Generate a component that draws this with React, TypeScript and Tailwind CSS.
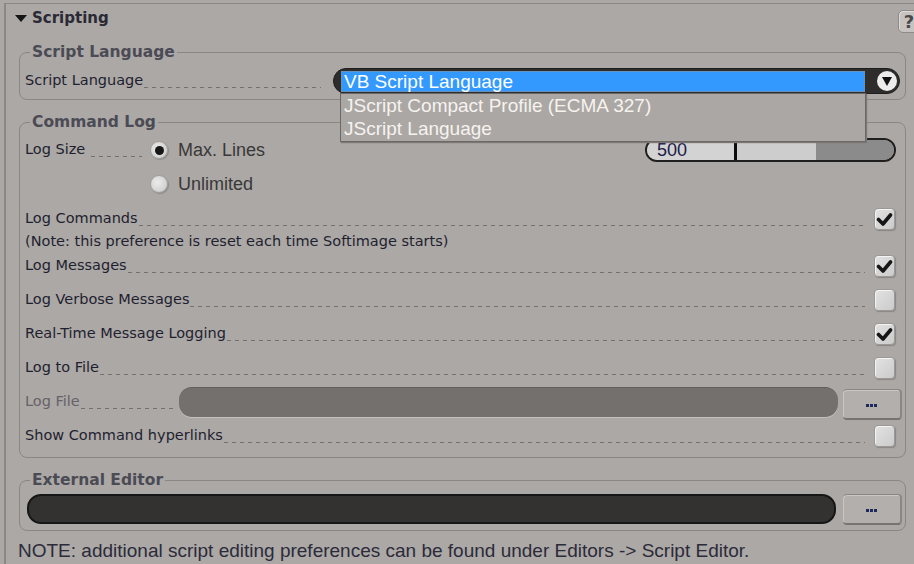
import React from "react";

const LBL = "font-['DejaVu_Sans',sans-serif] text-[14.5px] text-[#1e1f30]";
const ARIAL = "font-['Liberation_Sans',Arial,sans-serif]";
const TITLE = "font-['DejaVu_Sans',sans-serif] font-bold text-[15.5px] leading-[18px] text-[#4b4b55]";

function Leader({ className = "" }: { className?: string }) {
  return (
    <div
      className={
        "h-px mt-[12px] bg-[linear-gradient(to_right,#75716e_50%,transparent_50%)] bg-[length:8px_1px] bg-repeat-x " +
        className
      }
    />
  );
}

function Check({ checked }: { checked: boolean }) {
  return (
    <div className="w-[21px] h-[22px] shrink-0 rounded-[4px] border border-[#9c9895] bg-[linear-gradient(135deg,#e2e2e2,#cbcbcb)] shadow-[inset_1px_1px_0_#f4f4f4,1px_1px_1px_#8a8683] flex items-center justify-center">
      {checked && (
        <svg width="17" height="15" viewBox="0 0 17 15">
          <path d="M2.5 7.5 L7 12 L14.5 3" fill="none" stroke="#161616" strokeWidth="3.6" strokeLinecap="round" strokeLinejoin="round" />
        </svg>
      )}
    </div>
  );
}

function Radio({ on }: { on: boolean }) {
  return (
    <div className="w-[18px] h-[18px] shrink-0 rounded-full border border-[#a29e9b] bg-[radial-gradient(circle_at_40%_40%,#ececec,#c6c6c6)] shadow-[1px_1px_1px_#8d8986] flex items-center justify-center">
      {on && <div className="w-[9px] h-[9px] rounded-full bg-[#161616]" />}
    </div>
  );
}

function CheckRow({ label, checked, className = "h-[34px]" }: { label: string; checked: boolean; className?: string }) {
  return (
    <div className={"flex items-center " + className}>
      <div className="flex-1 flex items-center h-full">
        <span className={LBL + " whitespace-nowrap"}>{label}</span>
        <Leader className="flex-1 ml-[1px]" />
      </div>
      <div className="w-[9px]" />
      <Check checked={checked} />
    </div>
  );
}

function DotsButton() {
  return (
    <div className="w-[59px] h-[31px] shrink-0 rounded-[4px] border-t border-t-[#8a8683] border-b-2 border-b-[#77736f] border-r-2 border-r-[#8a8683] bg-[#b3afac] shadow-[inset_1px_1px_0_#c9c6c3] flex items-center justify-center">
      <div className="flex gap-[1px] mt-[3px]">
        <div className="w-[3px] h-[3px] bg-[#1d2a5a]" />
        <div className="w-[3px] h-[3px] bg-[#1d2a5a]" />
        <div className="w-[3px] h-[3px] bg-[#1d2a5a]" />
      </div>
    </div>
  );
}

export default function App() {
  return (
    <div className="w-[914px] h-[564px] bg-[#aca8a5] overflow-hidden">
      <div className="ml-[4px] mt-[3px] h-[561px] border-l-2 border-t border-[#8b8784] pl-[13px] pr-[8px]">
        {/* Header */}
        <div className="h-[29px] flex items-center">
          <svg width="12" height="7" viewBox="0 0 12 7" className="-ml-[4px] mr-[5px]">
            <polygon points="0,0 12,0 6,7" fill="#151515" />
          </svg>
          <span className="font-['DejaVu_Sans',sans-serif] font-bold text-[15px] text-[#2a2a35]">Scripting</span>
          <div className="ml-auto -mr-[14px] mt-[6px] w-[22px] h-[23px] rounded-[5px] border border-[#8e8a87] bg-[#c6c3c0] shadow-[inset_1px_1px_0_#dedbd8] flex items-center justify-center">
            <span className="font-['DejaVu_Sans',sans-serif] font-bold text-[18px] text-[#4a4a4a] leading-none">?</span>
          </div>
        </div>

        {/* Script Language group */}
        <fieldset className="mt-[10px] border border-[#8a8683] rounded-[8px] pl-[5px] pr-[10px] pb-[5px] relative">
          <legend className={TITLE + " ml-[5px] px-[2px]"}>Script Language</legend>
          <div className="mt-[7px] h-[26px] flex items-center">
            <div className="w-[296px] flex items-center h-full">
              <span className={LBL + " whitespace-nowrap"}>Script Language</span>
              <Leader className="flex-1 ml-[1px]" />
            </div>
            <div className="ml-[12px] flex-1 -mr-[5px] h-[26px] relative">
              <div className="h-full rounded-[13px] border border-[#1e1e1e] bg-[#2e2d2c] flex items-center pl-[7px] pr-[2px]">
                <div className="flex-1 h-[21px] bg-[#3399ff] border border-dotted border-[#9a8a78] flex items-center pl-[2px]">
                  <span className={ARIAL + " text-[19px] text-white leading-none"}>VB Script Language</span>
                </div>
                <div className="ml-[12px] w-[20px] h-[20px] rounded-full bg-[#ececec] flex items-center justify-center">
                  <svg width="10" height="9" viewBox="0 0 10 9">
                    <polygon points="0,0 10,0 5,9" fill="#111" />
                  </svg>
                </div>
              </div>
              {/* Open list (overlay) */}
              <div className="absolute left-[7px] top-[25px] w-[526px] h-[49px] z-10 bg-[#aba7a4] border border-[#6c6865] shadow-[1px_1px_1px_#7c7875] flex flex-col pl-[3px] pt-[1px]">
                <div className={ARIAL + " h-[23px] flex items-center text-[19px] text-[#f6f3ef]"}>JScript Compact Profile (ECMA 327)</div>
                <div className={ARIAL + " h-[23px] flex items-center text-[19px] text-[#f6f3ef]"}>JScript Language</div>
              </div>
            </div>
          </div>
        </fieldset>

        {/* Command Log group */}
        <fieldset className="mt-[13px] border border-[#8a8683] rounded-[8px] pl-[5px] pr-[10px] pb-[4px]">
          <legend className={TITLE + " ml-[5px] px-[2px]"}>Command Log</legend>
          <div className="mt-[2px] h-[34px] flex items-center">
            <div className="w-[117px] flex items-center h-full">
              <span className={LBL + " whitespace-nowrap"}>Log Size</span>
              <Leader className="flex-1 ml-[6px]" />
            </div>
            <div className="ml-[8px]"><Radio on={true} /></div>
            <span className={ARIAL + " ml-[10px] text-[18px] text-[#383838]"}>Max. Lines</span>
            <div className="ml-auto -mr-[1px] w-[251px] h-[24px] rounded-[12px] border-2 border-[#1f1f1f] overflow-hidden flex">
              <div className="w-[87px] bg-[#d3d3d3] flex items-center pl-[10px]">
                <span className={ARIAL + " text-[18px] text-[#1c1c4a] leading-none"}>500</span>
              </div>
              <div className="w-[3px] bg-[#0d0d0d]" />
              <div className="w-[79px] bg-[#cdcdcd]" />
              <div className="flex-1 bg-[#8b8b8b]" />
            </div>
          </div>
          <div className="h-[34px] flex items-center pl-[125px]">
            <Radio on={false} />
            <span className={ARIAL + " ml-[10px] text-[18px] text-[#383838]"}>Unlimited</span>
          </div>
          <CheckRow label="Log Commands" checked={true} className="h-[32px] pt-[4px]" />
          <div className={LBL + " h-[16px] leading-[16px] whitespace-nowrap"}>(Note: this preference is reset each time Softimage starts)</div>
          <CheckRow label="Log Messages" checked={true} />
          <CheckRow label="Log Verbose Messages" checked={false} />
          <CheckRow label="Real-Time Message Logging" checked={true} />
          <CheckRow label="Log to File" checked={false} />
          <div className="h-[34px] flex items-center">
            <div className="w-[149px] flex items-center h-full">
              <span className="font-['DejaVu_Sans',sans-serif] text-[14.5px] text-[#66626a] whitespace-nowrap">Log File</span>
              <Leader className="flex-1 ml-[1px]" />
            </div>
            <div className="ml-[5px] flex-1 h-[30px] rounded-[13px] bg-[#74706d] border-t border-[#625e5b] shadow-[0_1px_0_#c4c0bd]" />
            <div className="ml-[5px] -mr-[7px] mt-[4px]"><DotsButton /></div>
          </div>
          <CheckRow label="Show Command hyperlinks" checked={false} />
        </fieldset>

        {/* External Editor group */}
        <fieldset className="mt-[13px] border border-[#8a8683] rounded-[8px] pl-[5px] pr-[10px] pb-[5px]">
          <legend className={TITLE + " ml-[5px] px-[2px]"}>External Editor</legend>
          <div className="mt-[3px] flex items-center">
            <div className="ml-[2px] flex-1 h-[30px] rounded-[14px] border-2 border-[#161616] bg-[#333231]" />
            <div className="ml-[7px] -mr-[7px] mt-[2px]"><DotsButton /></div>
          </div>
        </fieldset>

        <div className={ARIAL + " mt-[10px] -ml-[1px] h-[20px] leading-[20px] text-[19px] text-[#2b2b3a] whitespace-nowrap"}>
          NOTE: additional script editing preferences can be found under Editors -&gt; Script Editor.
        </div>
      </div>
    </div>
  );
}
